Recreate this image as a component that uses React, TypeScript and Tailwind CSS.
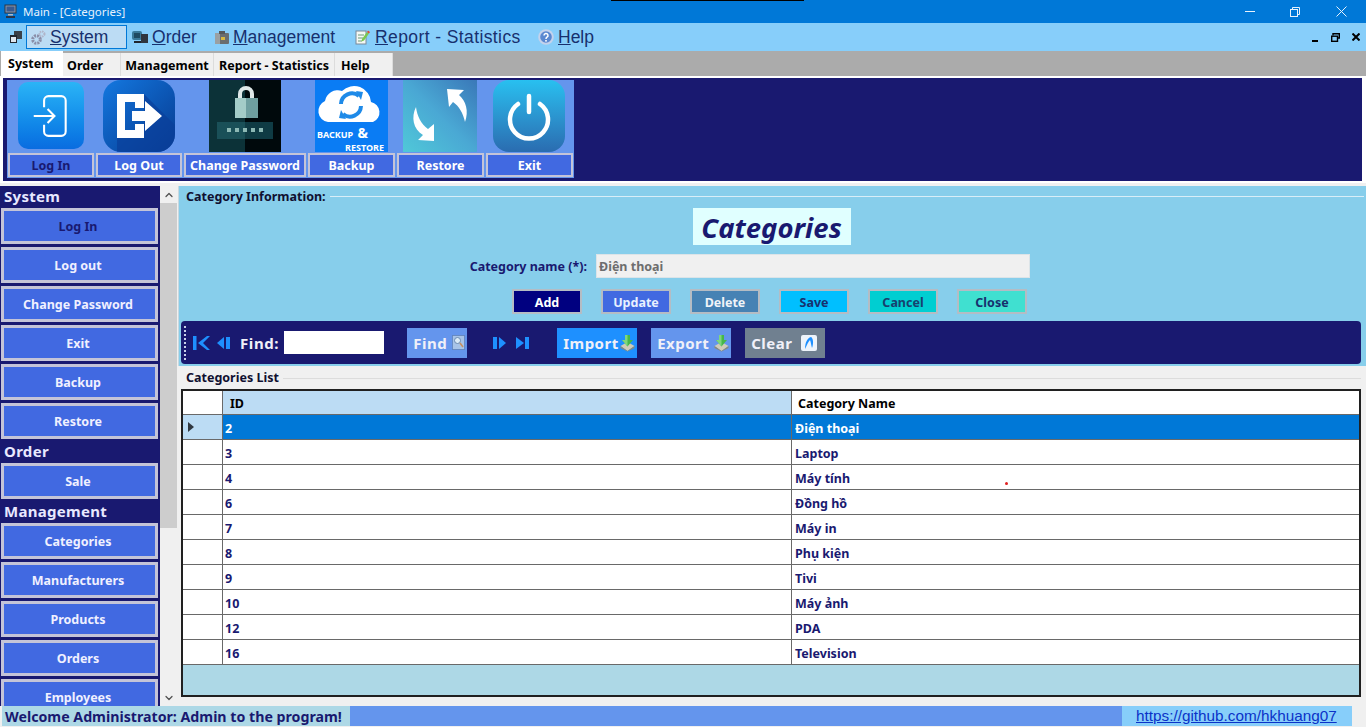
import { ChevronDown, ChevronUp } from "lucide-react";

const FONT = "font-['Noto_Sans','Liberation_Sans',sans-serif]";

const tabs = [
  { label: "System", w: "w-[62px]", active: true },
  { label: "Order", w: "w-[58px] pl-[4px]" },
  { label: "Management", w: "w-[93px] justify-center" },
  { label: "Report - Statistics", w: "w-[121px] justify-center" },
  { label: "Help", w: "w-[58px] pl-[6px]" },
];

const rows = [
  ["2", "Điện thoại"],
  ["3", "Laptop"],
  ["4", "Máy tính"],
  ["6", "Đồng hồ"],
  ["7", "Máy in"],
  ["8", "Phụ kiện"],
  ["9", "Tivi"],
  ["10", "Máy ảnh"],
  ["12", "PDA"],
  ["16", "Television"],
];

function MenuItem({ first, rest, icon, w, wide, active }: { first: string; rest: string; icon: React.ReactNode; w: string; wide?: boolean; active?: boolean }) {
  return (
    <div className={`flex h-[24px] ${w} shrink-0 items-center gap-[3px] pl-[3px] ${active ? "border border-[#0078d7] bg-[#bcdcf4]" : ""}`}>
      {icon}
      <span className={`pt-[2px] font-['Liberation_Sans',sans-serif] text-[17.5px] leading-none text-[#17306e] ${wide ? "ml-[2px] tracking-[0.4px]" : ""}`}>
        <span className="underline">{first}</span>
        {rest}
      </span>
    </div>
  );
}

function SideButton({ label, dark }: { label: string; dark?: boolean }) {
  return (
    <div className={`flex h-[36px] w-[157px] shrink-0 items-center justify-center border-[3px] border-[#c4c4d8] bg-[#4169e1] pt-[3px] pr-[3px] text-[12.5px] font-bold ${dark ? "text-[#191970]" : "text-[#f0f0ff]"}`}>
      {label}
    </div>
  );
}

function SideGroup({ title, items }: { title: string; items: { label: string; dark?: boolean }[] }) {
  return (
    <div className="flex flex-col">
      <div className="h-[22px] pl-[4px] text-[15px] leading-[20px] font-bold tracking-[0.3px] text-[#e8e8ff]">{title}</div>
      <div className="flex flex-col gap-[3px] pb-[2px] pl-[1px]">
        {items.map((i) => (
          <SideButton key={i.label} label={i.label} dark={i.dark} />
        ))}
      </div>
    </div>
  );
}

function RibbonButton({ label, w, dark, children }: { label: string; w: string; dark?: boolean; children: React.ReactNode }) {
  return (
    <div className={`flex ${w} flex-col items-center`}>
      <div className="flex h-[73px] items-start justify-center">{children}</div>
      <div className={`flex h-[24px] w-full items-center justify-center border-[2px] border-[#c4c4d8] bg-[#4169e1] pt-[2px] text-[12.5px] font-bold ${dark ? "text-[#191970]" : "text-white"}`}>
        {label}
      </div>
    </div>
  );
}

function FormButton({ label, bg, text }: { label: string; bg: string; text: string }) {
  return (
    <div className={`flex h-[25px] w-[70px] items-center justify-center border-[2px] border-[#b4bcc4] pt-[3px] text-[12.5px] font-bold ${bg} ${text}`}>
      {label}
    </div>
  );
}

function TrayArrowIcon() {
  return (
    <svg width="15" height="18" viewBox="0 0 15 18">
      <path d="M0.5 12l7-4 7 4-7 5z" fill="#d0ccb8" />
      <path d="M0.5 12v2l7 3.5 7-3.5v-2l-7 5z" fill="#8a8a78" />
      <path d="M5 1h5v5h3l-5.500 6.500L2 6h3z" fill="#46b84a" />
      <path d="M5 1h2.500v11.500L2 6h3z" fill="#7ed67e" />
    </svg>
  );
}

function ToolButton({ label, bg, w, icon }: { label: string; bg: string; w: string; icon: React.ReactNode }) {
  return (
    <div className={`flex h-[30px] ${w} items-center justify-between pr-[2px] pl-[6px] text-[15px] font-bold tracking-[0.5px] text-[#f0f0f8] ${bg}`}>
      <span className="pt-[1px]">{label}</span>
      {icon}
    </div>
  );
}

export default function App() {
  return (
    <div className={`relative flex h-[727px] w-[1366px] flex-col overflow-hidden bg-[#f0f0f0] ${FONT}`}>
      {/* window title */}
      <div className="flex h-[23px] shrink-0 items-center bg-[#0078d7] pl-[4px] text-white">
        <svg width="13" height="15" viewBox="0 0 13 15">
          <rect x="1" y="1" width="11" height="8" fill="#8a98a8" stroke="#2a3448" />
          <rect x="2.500" y="2.500" width="8" height="5" fill="#3a5a90" />
          <rect x="4" y="10" width="5" height="1.500" fill="#b0b8c4" />
          <rect x="2" y="12" width="9" height="2" fill="#2a3448" />
        </svg>
        <span className="ml-[6px] text-[11.5px] text-[#e8f2fc]">Main - [Categories]</span>
        <div className="ml-auto flex items-center pr-[19px]">
          <div className="mr-[35px] h-px w-[10px] bg-[#e8f2fc]" />
          <svg width="10" height="10" viewBox="0 0 10 10" className="mr-[36px]" fill="none" stroke="#e8f2fc">
            <path d="M2.500 2V.5h7v7H8" />
            <rect x=".5" y="2.500" width="7" height="7" />
          </svg>
          <svg width="11" height="11" viewBox="0 0 11 11" stroke="#e8f2fc">
            <path d="M.5.5l10 10M10.500.5l-10 10" />
          </svg>
        </div>
      </div>

      {/* menu bar */}
      <div className="flex h-[28px] shrink-0 items-center bg-[#87cefa] pl-[9px]">
        <svg width="14" height="14" viewBox="0 0 14 14" className="mr-[3px]">
          <rect x="5" y="1" width="8" height="8" fill="#3a4048" />
          <rect x="1" y="5" width="7" height="8" fill="#20262e" />
          <rect x="2" y="7" width="5" height="5" fill="#dfe6ee" />
        </svg>
        <MenuItem
          first="S"
          rest="ystem"
          w="w-[101px]"
          active
          icon={
            <svg width="17" height="17" viewBox="0 0 17 17">
              <circle cx="6.500" cy="10.500" r="3.800" fill="none" stroke="#8a8ea8" strokeWidth="3" strokeDasharray="2 1" />
              <circle cx="12" cy="5" r="2.500" fill="none" stroke="#b0b4c8" strokeWidth="2" strokeDasharray="1.500 .8" />
            </svg>
          }
        />
        <div className="ml-[1px]">
          <MenuItem
            first="O"
            rest="rder"
            w="w-[83px]"
            icon={
              <svg width="18" height="16" viewBox="0 0 18 16">
                <rect x="1" y="2" width="10" height="9" rx="2" fill="#3a7a9a" />
                <rect x="3" y="4" width="6" height="5" fill="#1e4a62" />
                <rect x="10" y="5" width="7" height="9" fill="#30363e" />
                <rect x="3" y="12" width="7" height="2" fill="#20262e" />
              </svg>
            }
          />
        </div>
        <MenuItem
          first="M"
          rest="anagement"
          w="w-[141px]"
          icon={
            <svg width="16" height="16" viewBox="0 0 16 16">
              <rect x="1" y="4" width="14" height="11" rx="1" fill="#6a6e70" />
              <rect x="1" y="4" width="5" height="11" fill="#9aa0a2" />
              <rect x="5" y="2" width="6" height="3" fill="#55585a" />
              <rect x="7" y="8" width="4" height="3" fill="#d8b840" />
            </svg>
          }
        />
        <MenuItem
          first="R"
          rest="eport - Statistics"
          w="w-[183px]"
          wide
          icon={
            <svg width="15" height="16" viewBox="0 0 15 16">
              <rect x="1" y="2" width="10" height="13" fill="#f4f8f4" stroke="#7a8a9a" />
              <path d="M3 6h6M3 9h5M3 12h4" stroke="#6a9a7a" />
              <path d="M7 10l5-7 2 1.500-5 7-2.500 1z" fill="#7ac850" />
              <path d="M12 3l1-1.500 2 1.500-1 1.500z" fill="#e04a30" />
            </svg>
          }
        />
        <MenuItem
          first="H"
          rest="elp"
          w="w-[70px]"
          icon={
            <svg width="16" height="16" viewBox="0 0 16 16" className="mr-[1px]">
              <circle cx="8" cy="8" r="7.800" fill="#c4d2ec" />
              <circle cx="8" cy="8" r="5.800" fill="#5a88d0" />
              <path d="M6 6.500a2 2 0 1 1 3 1.700c-.8.5-1 .8-1 1.800" fill="none" stroke="white" strokeWidth="1.500" />
              <rect x="7.200" y="11" width="1.600" height="1.600" fill="white" />
            </svg>
          }
        />
        <div className="ml-auto flex items-center pr-[6px]">
          <div className="mt-[7px] mr-[13px] h-[2px] w-[6px] bg-black" />
          <svg width="9" height="9" viewBox="0 0 9 9" className="mr-[12px]" fill="none" stroke="black">
            <path d="M2 2.500V.7h6.300V5H6.500" strokeWidth="1.400" />
            <rect x=".7" y="3.200" width="5.800" height="5.100" strokeWidth="1.400" />
          </svg>
          <svg width="8" height="8" viewBox="0 0 8 8" stroke="black" strokeWidth="2">
            <path d="M.5.5l7 7M7.500.5l-7 7" />
          </svg>
        </div>
      </div>

      {/* ribbon tabs */}
      <div className="flex h-[25px] shrink-0 items-end bg-[#ababab] pl-[1px]">
        {tabs.map((t) =>
          t.active ? (
            <div key={t.label} className={`flex h-[25px] ${t.w} items-center bg-white pt-[2px] pl-[7px] text-[12.5px] font-bold text-black`}>
              {t.label}
            </div>
          ) : (
            <div key={t.label} className={`flex h-[23px] ${t.w} items-center border-r border-[#dcdcdc] bg-[#f0f0f0] pt-[4px] text-[12.5px] font-bold text-black`}>
              {t.label}
            </div>
          )
        )}
      </div>

      {/* ribbon */}
      <div className="h-[107px] shrink-0 bg-white px-[3px] pt-[2px] pr-[4px]">
        <div className="h-[103px] bg-[#191970] pt-[2px] pl-[4px]">
          <div className="flex h-[98px] w-[567px] gap-[2px] bg-[#6495ed] pl-px">
            <RibbonButton label="Log In" w="w-[86px]" dark>
              <div className="mt-[2px] flex h-[67px] w-[66px] items-center justify-center rounded-[10px] bg-linear-to-b from-[#2bb4f6] to-[#0a6ce0]">
                <svg width="38" height="46" viewBox="0 0 44 52" fill="none" stroke="white" strokeWidth="2.400">
                  <path d="M14 16V8a5 5 0 0 1 5-5h15a5 5 0 0 1 5 5v36a5 5 0 0 1-5 5H19a5 5 0 0 1-5-5v-8" />
                  <path d="M2 26h24M18 18l8 8-8 8" />
                </svg>
              </div>
            </RibbonButton>
            <RibbonButton label="Log Out" w="w-[86px]">
              <div className="h-[72px] w-[72px] overflow-hidden rounded-[18px] bg-linear-to-br from-[#1478e0] to-[#083a90]">
                <svg width="72" height="72" viewBox="0 0 72 72">
                  <path d="M41 14L72 45V72H14V58H41Z" fill="#0a3f9a" opacity="0.7" />
                  <path d="M14 14h27v14h-9V22H22v28h10v-6h9v14H14z" fill="white" />
                  <path d="M29 31h13v-10l17 15-17 15V41H29z" fill="white" />
                </svg>
              </div>
            </RibbonButton>
            <RibbonButton label="Change Password" w="w-[122px]">
              <svg width="72" height="72" viewBox="0 0 72 72">
                <rect width="36" height="72" fill="#0c3238" />
                <rect x="36" width="36" height="72" fill="#00090c" />
                <path d="M29 19v-5a8 8 0 0 1 16 0v5h-4v-5a4 4 0 0 0-8 0v5z" fill="#dfe8e8" />
                <rect x="26" y="18" width="11" height="20" fill="#a4ccc8" />
                <rect x="37" y="18" width="12" height="20" fill="#6f9fa0" />
                <rect x="8" y="42" width="28" height="17" fill="#1a5058" />
                <rect x="36" y="42" width="28" height="17" fill="#0f3b44" />
                <g fill="#8cb8b4">
                  <rect x="18" y="48" width="4" height="4" />
                  <rect x="26" y="48" width="4" height="4" />
                  <rect x="34" y="48" width="4" height="4" />
                  <rect x="42" y="48" width="4" height="4" />
                  <rect x="50" y="48" width="4" height="4" />
                </g>
              </svg>
            </RibbonButton>
            <RibbonButton label="Backup" w="w-[87px]">
              <div className="flex h-[72px] w-[73px] flex-col bg-[#0a7cf4] text-white">
                <svg width="73" height="45" viewBox="0 0 73 45" className="shrink-0">
                  <path d="M13 42a11 11 0 0 1-3-21 13 13 0 0 1 17-10 17 17 0 0 1 29 11 10.500 10.500 0 0 1 2 20z" fill="white" />
                  <path d="M26 24a11 11 0 0 1 18-8" fill="none" stroke="#1e8ae8" strokeWidth="4" />
                  <path d="M46 26a11 11 0 0 1-18 8" fill="none" stroke="#1e8ae8" strokeWidth="4" />
                  <path d="M41 11l7 1-2 8z" fill="#1e8ae8" />
                  <path d="M31 39l-7-1 2-8z" fill="#1e8ae8" />
                </svg>
                <div className="pl-[2px] text-[9px] leading-[15px] font-bold whitespace-nowrap">
                  BACKUP <span className="ml-[2px] text-[14px] leading-[15px]">&amp;</span>
                </div>
                <div className="pr-[4px] text-right text-[9px] leading-[12px] font-bold">RESTORE</div>
              </div>
            </RibbonButton>
            <RibbonButton label="Restore" w="w-[87px]">
              <div className="mr-[2px] h-[72px] w-[74px] bg-linear-to-tr from-[#50c8d8] via-[#4aa8d4] to-[#3a78b8]">
                <svg width="74" height="72" viewBox="0 0 74 72" fill="white">
                  <path d="M44 9L61 10L56 15C63 21 66 31 62 42C60 33 56 26 50 22L46 27Z" />
                  <path d="M13 27C14 36 18 44 25 49L31 44L31 61L15 60L20 55C10 49 8 37 13 27Z" />
                </svg>
              </div>
            </RibbonButton>
            <RibbonButton label="Exit" w="w-[87px]">
              <div className="mr-[2px] h-[72px] w-[72px] rounded-[16px] bg-linear-to-b from-[#28c0f0] to-[#2a6cb0]">
                <svg width="72" height="72" viewBox="0 0 72 72" fill="none" stroke="white" strokeWidth="4.500" strokeLinecap="round">
                  <path d="M25 24a19 19 0 1 0 22 0" />
                  <path d="M36 16v16" />
                </svg>
              </div>
            </RibbonButton>
          </div>
        </div>
      </div>

      {/* body */}
      <div className="flex min-h-0 flex-1 pt-[3px]">
        <div className="flex w-[160px] shrink-0 flex-col overflow-hidden bg-[#191970]">
          <SideGroup
            title="System"
            items={[{ label: "Log In", dark: true }, { label: "Log out" }, { label: "Change Password" }, { label: "Exit" }, { label: "Backup" }, { label: "Restore" }]}
          />
          <SideGroup title="Order" items={[{ label: "Sale" }]} />
          <SideGroup
            title="Management"
            items={[{ label: "Categories" }, { label: "Manufacturers" }, { label: "Products" }, { label: "Orders" }, { label: "Employees" }]}
          />
        </div>
        <div className="flex w-[17px] shrink-0 flex-col items-center bg-[#f0f0f0] text-[#505050]">
          <div className="flex h-[17px] items-center justify-center">
            <ChevronUp size={12} strokeWidth={2.500} />
          </div>
          <div className="h-[325px] w-full bg-[#cdcdcd]" />
          <div className="mt-auto flex h-[17px] items-center justify-center">
            <ChevronDown size={12} strokeWidth={2.500} />
          </div>
        </div>

        {/* content */}
        <div className="flex min-w-0 flex-1 flex-col pl-[1px]">
          <div className="flex h-[180px] shrink-0 flex-col border-l border-[#c8d8e0] bg-[#87ceeb] pr-[2px]">
            <div className="flex h-[20px] items-center pl-[7px]">
              <span className="pt-[2px] text-[12.5px] font-bold text-[#101030]">Category Information:</span>
              <div className="ml-[4px] h-px flex-1 bg-[#d8eef8]" />
            </div>
            <div className="mt-[2px] flex justify-center">
              <div className="flex h-[37px] w-[158px] items-center justify-center bg-[#e0ffff] pt-[2px] text-[27.5px] font-bold text-[#191970] italic">Categories</div>
            </div>
            <div className="mt-[9px] flex h-[24px] items-center">
              <div className="w-[417px] pt-[2px] pr-[9px] text-right text-[12.5px] font-bold text-[#191970]">Category name (*):</div>
              <div className="flex h-[24px] w-[434px] items-center border border-[#dce4e8] bg-[#f0f0f0] pt-[2px] pl-[2px] text-[12.5px] font-bold text-[#6d6d6d]">Điện thoại</div>
            </div>
            <div className="mt-[11px] flex gap-[19px] pl-[333px]">
              <FormButton label="Add" bg="bg-[#000080]" text="text-white" />
              <FormButton label="Update" bg="bg-[#4169e1]" text="text-[#e8f0ff]" />
              <FormButton label="Delete" bg="bg-[#4682b4]" text="text-[#f0f4f8]" />
              <FormButton label="Save" bg="bg-[#00bfff]" text="text-[#17306e]" />
              <FormButton label="Cancel" bg="bg-[#00ced1]" text="text-[#17406e]" />
              <FormButton label="Close" bg="bg-[#40e0d0]" text="text-[#17306e]" />
            </div>
            <div className="mt-[7px] mr-[3px] ml-[2px] flex h-[43px] items-center rounded-[4px] bg-[#191970] pl-[3px]">
              <div className="h-[34px] w-[2px] border-l-2 border-dotted border-[#c8d0e8]" />
              <svg width="17" height="14" viewBox="0 0 17 14" fill="#1e90ff" className="ml-[7px]">
                <rect x="0" y="0" width="3.500" height="14" />
                <path d="M14 0h3l-7 7 7 7h-3L5 7z" />
              </svg>
              <svg width="15" height="14" viewBox="0 0 15 14" fill="#1e90ff" className="ml-[6px]">
                <path d="M8 1v12L1 7z" />
                <rect x="10" y="1" width="4" height="12" />
              </svg>
              <span className="ml-[9px] pt-[1px] text-[15px] font-bold tracking-[0.6px] text-[#f0f0f8]">Find:</span>
              <div className="ml-[5px] h-[23px] w-[100px] bg-white" />
              <div className="ml-[23px]">
                <ToolButton
                  label="Find"
                  bg="bg-[#6495ed]"
                  w="w-[60px]"
                  icon={
                    <svg width="13" height="15" viewBox="0 0 13 15">
                      <rect x=".5" y=".5" width="12" height="14" fill="#a8c4e8" stroke="#4a6a9a" strokeDasharray="1 1" />
                      <circle cx="5.500" cy="5.500" r="3" fill="#dcecf8" stroke="#6a8ab0" />
                      <path d="M8 8l3 4" stroke="#c89060" strokeWidth="1.500" />
                    </svg>
                  }
                />
              </div>
              <svg width="15" height="14" viewBox="0 0 15 14" fill="#1e90ff" className="ml-[25px]">
                <rect x="1" y="1" width="4" height="12" />
                <path d="M7 1v12l7-6z" />
              </svg>
              <svg width="15" height="14" viewBox="0 0 15 14" fill="#1e90ff" className="ml-[8px]">
                <path d="M1 1v12l8-6z" />
                <rect x="10" y="1" width="4" height="12" />
              </svg>
              <div className="ml-[27px]">
                <ToolButton label="Import" bg="bg-[#1e90ff]" w="w-[80px]" icon={<TrayArrowIcon />} />
              </div>
              <div className="ml-[14px]">
                <ToolButton label="Export" bg="bg-[#6495ed]" w="w-[80px]" icon={<TrayArrowIcon />} />
              </div>
              <div className="ml-[14px]">
                <ToolButton
                  label="Clear"
                  bg="bg-[#708090]"
                  w="w-[80px]"
                  icon={
                    <svg width="16" height="16" viewBox="0 0 16 16" className="mr-[6px]">
                      <rect width="16" height="16" rx="2" fill="#eef4fb" />
                      <path d="M4 14c0-6 2-11 6-12 2 1 3 6 1 11-1-3-1-6-2-8-2 2-3 5-5 9z" fill="#1e90ff" />
                    </svg>
                  }
                />
              </div>
            </div>
          </div>

          {/* list */}
          <div className="flex min-h-0 flex-1 flex-col pt-[2px] pr-[5px] pl-[3px]">
            <div className="flex h-[21px] items-center pl-[5px]">
              <span className="text-[12.5px] font-bold text-[#101030]">Categories List</span>
              <div className="ml-[4px] h-px flex-1 bg-[#dcdcdc]" />
            </div>
            <div className="h-[308px] border-[2px] border-[#202020] bg-[#add8e6]">
              <div className="flex h-[24px] border-b border-[#696969] bg-white text-[12.5px] font-bold text-black">
                <div className="w-[40px] border-r border-[#696969]" />
                <div className="flex w-[569px] items-center border-r border-[#696969] bg-[#bcdcf4] pt-[3px] pl-[7px]">ID</div>
                <div className="flex flex-1 items-center pt-[3px] pl-[6px]">Category Name</div>
              </div>
              {rows.map(([id, name], idx) => (
                <div key={id} className={`flex h-[25px] border-b border-[#696969] text-[12.5px] font-bold ${idx === 0 ? "bg-[#0078d7] text-white" : "bg-white text-[#191970]"}`}>
                  <div className={`flex w-[40px] items-center border-r border-[#696969] pl-[5px] ${idx === 0 ? "bg-[#bcdcf4]" : "bg-white"}`}>
                    {idx === 0 && (
                      <svg width="6" height="10" viewBox="0 0 6 10">
                        <path d="M0 0l6 5-6 5z" fill="#303840" />
                      </svg>
                    )}
                  </div>
                  <div className="flex w-[569px] items-center border-r border-[#696969] pt-[4px] pl-[2px]">{id}</div>
                  <div className="flex flex-1 items-center pt-[4px] pl-[3px]">{name}</div>
                </div>
              ))}
            </div>
          </div>
        </div>
      </div>

      {/* status bar */}
      <div className="flex h-[21px] shrink-0 items-center bg-[#f0f0f0] pr-[14px] pb-[1px] pl-[2px]">
        <div className="flex h-[20px] w-[348px] items-center overflow-hidden bg-[#add8e6] pt-[1px] pl-[3px] text-[14.2px] font-bold whitespace-nowrap text-[#191970]">
          Welcome Administrator: Admin to the program!
        </div>
        <div className="h-[20px] flex-1 bg-[#6495ed]" />
        <div className="flex h-[20px] w-[230px] items-center bg-[#87cefa] pt-[1px] pl-[14px] font-['Liberation_Sans',sans-serif] text-[15.3px] text-[#0b32c8] underline">
          https://github.com/hkhuang07
        </div>
      </div>

      {/* overlays: capture artefacts */}
      <div className="absolute top-0 left-[611px] h-px w-[193px] bg-black" />
      <div className="absolute top-[482px] left-[1005px] h-[3px] w-[3px] rounded-full bg-[#e02020]" />
    </div>
  );
}
